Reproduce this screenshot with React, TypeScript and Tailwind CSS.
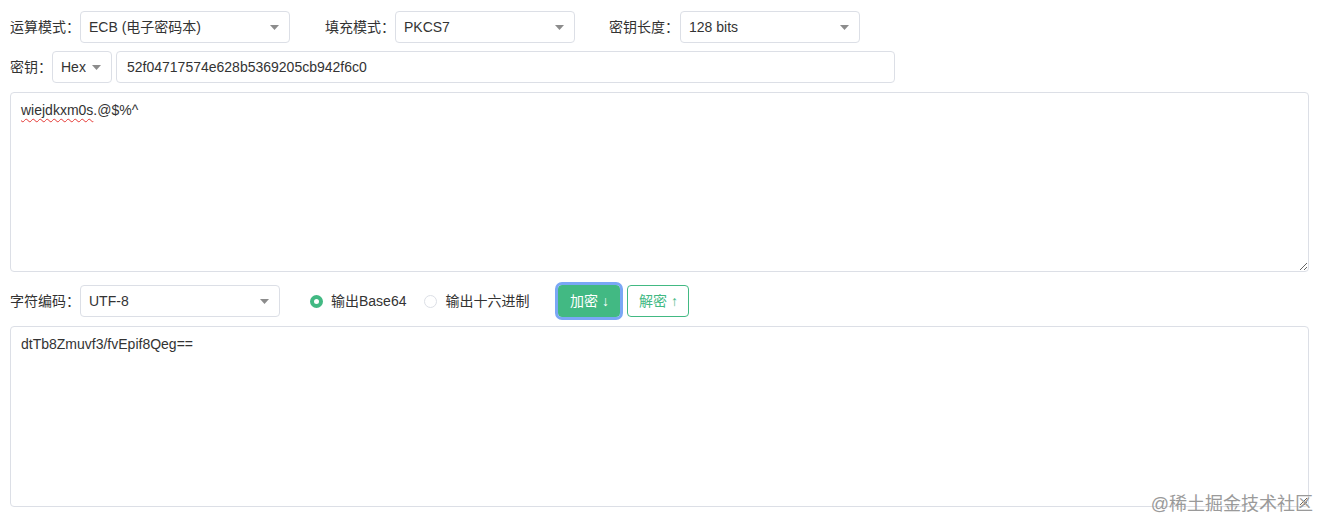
import React from 'react';

const font = { fontFamily: '"Liberation Sans", "Noto Sans CJK SC", sans-serif' };

const Caret: React.FC = () => (
  <svg width="9" height="5" viewBox="0 0 9 5" className="shrink-0">
    <path d="M0 0 L9 0 L4.5 5 Z" fill="#8c8c8c" />
  </svg>
);

interface SelectBoxProps {
  value: string;
  className: string;
}

const SelectBox: React.FC<SelectBoxProps> = ({ value, className }) => (
  <div
    className={`flex h-8 items-center justify-between rounded-[4px] border border-[#dcdfe6] bg-white pl-[8px] pr-[10px] text-[14px] text-[#333] ${className}`}
  >
    <span className="truncate">{value}</span>
    <Caret />
  </div>
);

const Label: React.FC<{ text: string; className?: string }> = ({ text, className = '' }) => (
  <span className={`shrink-0 text-[14px] text-[#333] ${className}`}>{text}</span>
);

const Radio: React.FC<{ checked?: boolean; label: string }> = ({ checked, label }) => (
  <div className="flex items-center gap-[8px]">
    <span
      className={
        checked
          ? 'h-[13px] w-[13px] rounded-full border-[4px] border-[#42b983] bg-white'
          : 'h-[13px] w-[13px] rounded-full border border-[#dcdfe6] bg-white'
      }
    />
    <span className="text-[14px] text-[#333]">{label}</span>
  </div>
);

export default function App() {
  return (
    <div style={font} className="relative h-[520px] w-[1320px] bg-white pl-[10px] pr-[11px] pt-[11px]">
      {/* row 1 */}
      <div className="flex h-8 items-center">
        <Label text="运算模式：" className="w-[70px]" />
        <SelectBox value="ECB (电子密码本)" className="w-[210px]" />
        <Label text="填充模式：" className="ml-[35px] w-[70px]" />
        <SelectBox value="PKCS7" className="w-[180px]" />
        <Label text="密钥长度：" className="ml-[34px] w-[71px]" />
        <SelectBox value="128 bits" className="w-[180px]" />
      </div>

      {/* row 2 */}
      <div className="mt-[8px] flex h-8 items-center">
        <Label text="密钥：" className="w-[42px]" />
        <SelectBox value="Hex" className="w-[60px]" />
        <div className="ml-[4px] flex h-8 w-[779px] items-center rounded-[4px] border border-[#dcdfe6] px-[10px] text-[14px] text-[#333]">
          52f04717574e628b5369205cb942f6c0
        </div>
      </div>

      {/* input text */}
      <div className="mt-[9px] h-[180px] w-full resize-y overflow-auto rounded-[4px] border border-[#dcdfe6] px-[10px] py-[7px] text-[14px] leading-[20px] text-[#333]">
        <span className="underline decoration-[#e53935] decoration-wavy decoration-1 underline-offset-[3px]">
          wiejdkxm0s
        </span>
        .@$%^
      </div>

      {/* row 3 */}
      <div className="mt-[13px] flex h-8 items-center">
        <Label text="字符编码：" className="w-[70px]" />
        <SelectBox value="UTF-8" className="w-[200px]" />
        <div className="ml-[30px]">
          <Radio checked label="输出Base64" />
        </div>
        <div className="ml-[18px]">
          <Radio label="输出十六进制" />
        </div>
        <button className="ml-[29px] h-[32px] w-[62px] rounded-[4px] bg-[#42b983] text-[14px] text-white outline-[3px] outline-[#7aa7f5] outline-solid">
          加密 ↓
        </button>
        <button className="ml-[7px] h-[32px] w-[62px] rounded-[4px] border border-[#42b983] bg-white text-[14px] text-[#42b983]">
          解密 ↑
        </button>
      </div>

      {/* output text */}
      <div className="mt-[9px] h-[181px] w-full resize-y overflow-auto rounded-[4px] border border-[#dcdfe6] px-[10px] py-[7px] text-[14px] leading-[20px] text-[#333]">
        dtTb8Zmuvf3/fvEpif8Qeg==
      </div>

      <div className="absolute bottom-[7px] right-[7px] text-[18px] leading-none text-[#9a9a9a]">
        @稀土掘金技术社区
      </div>
    </div>
  );
}
